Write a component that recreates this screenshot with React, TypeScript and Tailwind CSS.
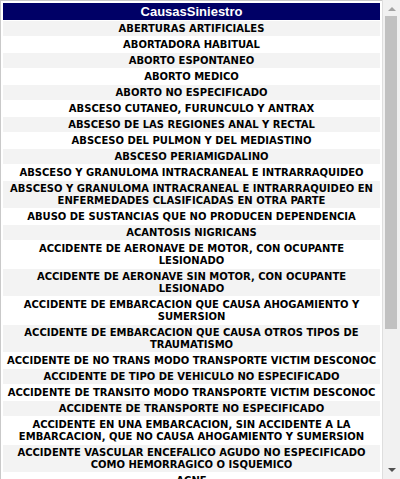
const causas: string[] = [
	"ABERTURAS ARTIFICIALES",
	"ABORTADORA HABITUAL",
	"ABORTO ESPONTANEO",
	"ABORTO MEDICO",
	"ABORTO NO ESPECIFICADO",
	"ABSCESO CUTANEO, FURUNCULO Y ANTRAX",
	"ABSCESO DE LAS REGIONES ANAL Y RECTAL",
	"ABSCESO DEL PULMON Y DEL MEDIASTINO",
	"ABSCESO PERIAMIGDALINO",
	"ABSCESO Y GRANULOMA INTRACRANEAL E INTRARRAQUIDEO",
	"ABSCESO Y GRANULOMA INTRACRANEAL E INTRARRAQUIDEO EN\nENFERMEDADES CLASIFICADAS EN OTRA PARTE",
	"ABUSO DE SUSTANCIAS QUE NO PRODUCEN DEPENDENCIA",
	"ACANTOSIS NIGRICANS",
	"ACCIDENTE DE AERONAVE DE MOTOR, CON OCUPANTE\nLESIONADO",
	"ACCIDENTE DE AERONAVE SIN MOTOR, CON OCUPANTE\nLESIONADO",
	"ACCIDENTE DE EMBARCACION QUE CAUSA AHOGAMIENTO Y\nSUMERSION",
	"ACCIDENTE DE EMBARCACION QUE CAUSA OTROS TIPOS DE\nTRAUMATISMO",
	"ACCIDENTE DE NO TRANS MODO TRANSPORTE VICTIM DESCONOC",
	"ACCIDENTE DE TIPO DE VEHICULO NO ESPECIFICADO",
	"ACCIDENTE DE TRANSITO MODO TRANSPORTE VICTIM DESCONOC",
	"ACCIDENTE DE TRANSPORTE NO ESPECIFICADO",
	"ACCIDENTE EN UNA EMBARCACION, SIN ACCIDENTE A LA\nEMBARCACION, QUE NO CAUSA AHOGAMIENTO Y SUMERSION",
	"ACCIDENTE VASCULAR ENCEFALICO AGUDO NO ESPECIFICADO\nCOMO HEMORRAGICO O ISQUEMICO",
	"ACNE",
	"ACNE ROSACEA",
	"ACROMEGALIA Y GIGANTISMO HIPOFISARIO",
	"ACTINOMICOSIS",
	"ADHERENCIAS PERITONEALES",
	"AFAQUIA",
	"AGENESIA RENAL Y OTRAS DEFICIENCIAS DEL RIÑON",
	"AGOTAMIENTO DEL CALOR",
	"AGRANULOCITOSIS",
	"AHOGAMIENTO Y SUMERSION NO ESPECIFICADO",
	"ALCOHOLISMO",
	"ALOPECIA AREATA",
];

function ScrollBar() {
	return (
		<div className="w-[18px] h-full flex flex-col border-l border-[#dedede] bg-[#f1f1f1]">
			<div className="h-[16px] flex items-center justify-center">
				<svg width="8" height="5" viewBox="0 0 8 5">
					<path d="M0 5 L4 1 L8 5 Z" fill="#a3a3a3" />
				</svg>
			</div>
			<div className="ml-[2px] w-[12px] h-[313px] bg-[#c1c1c1]" />
			<div className="flex-1" />
			<div className="h-[17px] flex items-center justify-center">
				<svg width="8" height="5" viewBox="0 0 8 5">
					<path d="M0 0 L8 0 L4 4 Z" fill="#505050" />
				</svg>
			</div>
		</div>
	);
}

export default function App() {
	return (
		<div className="w-[400px] h-[479px] flex bg-white overflow-hidden">
			<div className="w-[382px] h-full overflow-hidden border-l border-t border-[#c9c9c9] p-px">
				<table className="w-full border-separate border-spacing-[1px]">
					<thead>
						<tr>
							<th className="h-[17px] bg-[#000066] text-white text-[13px] leading-[17px] font-bold font-['Liberation_Sans',Arial,sans-serif] p-0">
								CausasSiniestro
							</th>
						</tr>
					</thead>
					<tbody>
						{causas.map((c, i) => (
							<tr key={c}>
								<td
									className={
										(i % 2 === 0 ? "bg-[#f3f3f3] " : "bg-white ") +
										"whitespace-pre-line text-center text-black text-[10px] leading-[12px] font-bold font-['DejaVu_Sans',Verdana,sans-serif] pt-[2px] pb-px px-px"
									}
								>
									{c}
								</td>
							</tr>
						))}
					</tbody>
				</table>
			</div>
			<ScrollBar />
		</div>
	);
}
